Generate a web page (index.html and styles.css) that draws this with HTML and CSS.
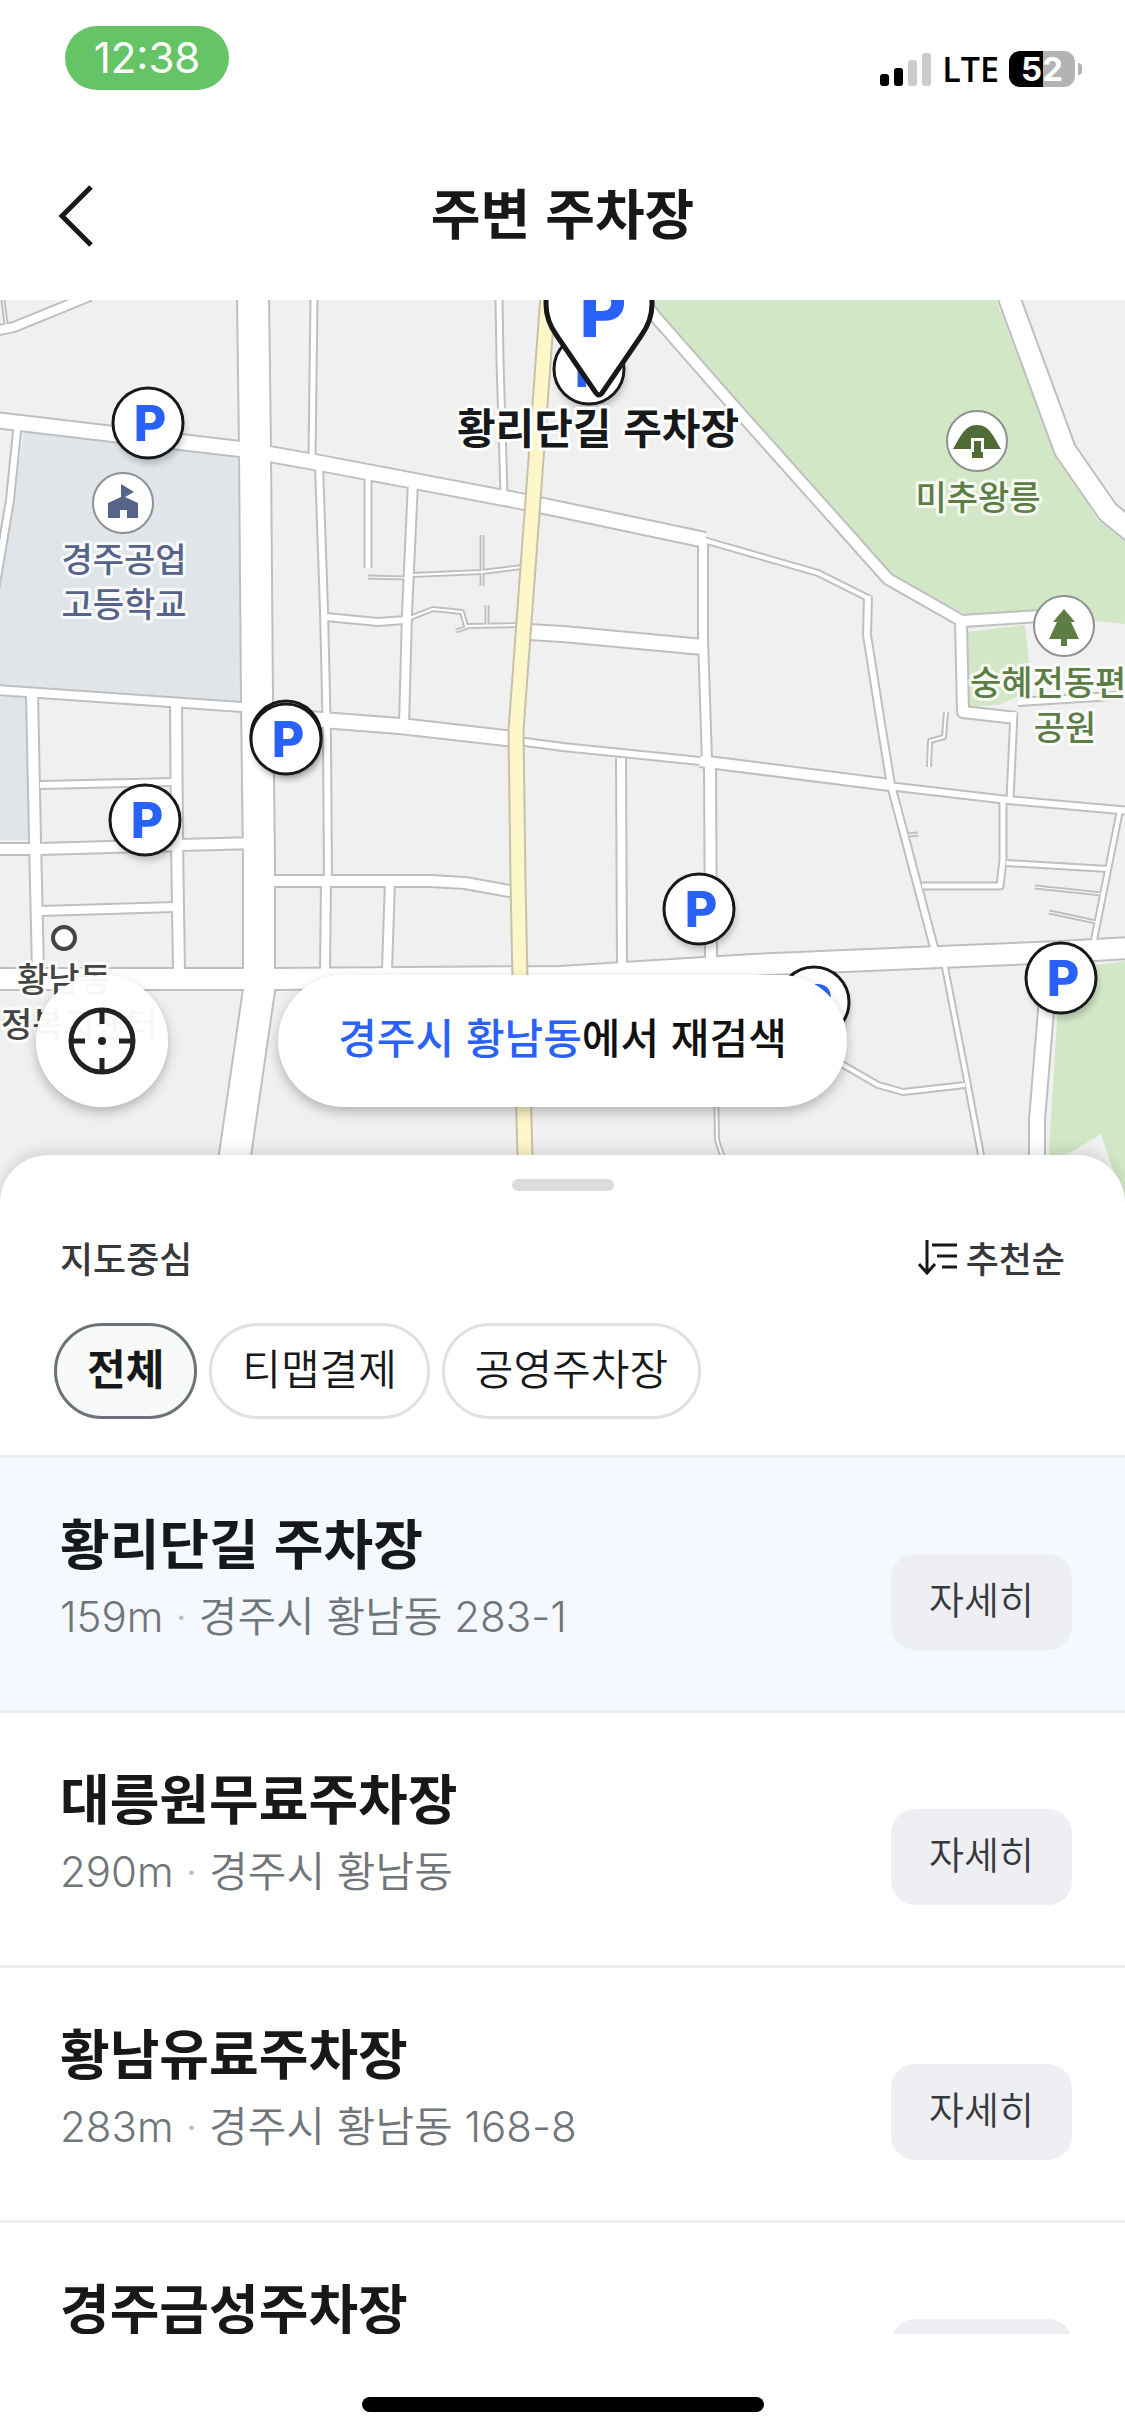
FILE: index.html
```html
<!DOCTYPE html>
<html lang="ko">
<head>
    <meta charset="UTF-8">
    <meta name="viewport" content="width=device-width, initial-scale=1.0">
    <title>주변 주차장</title>
    <link rel="stylesheet" href="styles.css">
</head>
<body>

<div class="status-bar">
    <span class="time">12:38</span>
    <div class="status-icons">
        <svg class="signal" viewBox="0 0 52 34" width="52" height="34">
            <rect x="0" y="22" width="9" height="12" rx="3"/>
            <rect x="14" y="16" width="9" height="18" rx="3"/>
            <rect class="off" x="28" y="8" width="9" height="26" rx="3"/>
            <rect class="off" x="42" y="1" width="9" height="33" rx="3"/>
        </svg>
        <span class="network">LTE</span>
        <span class="battery">52</span>
    </div>
</div>

<header class="header">
    <button class="back" aria-label="뒤로">
        <svg viewBox="0 0 36 62" width="36" height="62"><path d="M33 2 L4 31 L33 60"/></svg>
    </button>
    <h1>주변 주차장</h1>
</header>

<main>
    <section class="map">
        <svg class="map-canvas" viewBox="0 0 1125 903">
            <defs>
                <g id="roads">
                    <path class="w2" d="M3 0L6 24 M368 277L405 278 M482 235V286 M487 305V325 M456 331L468 327 M1035 587L1102 594 M1049 612L1096 622 M908 535L918 534"/>
                    <path class="w3" d="M412 275L482 272L522 267 M410 318L433 309L462 312L466 326L520 325 M946 412L944 437L930 441L929 467 M716 780L717 840L722 855L732 903"/>
                    <path class="w4" d="M944 662L966 775L981 855L988 903 M965 785L903 792L878 785L840 763 M1006 563L1108 569 M1120 510L1093 645 M700 239L818 273L870 299"/>
                    <path class="w5" d="M314 0L312 158 M499 0L500 60L504 195 M368 176V268 M1014 412L1010 500 M1003 500L1003 560L1000 586H922"/>
                    <path class="w7" d="M319 165L324 310L327 440L328 580 M326 317L378 322L405 320 M18 122L10 200L-5 290 M40 485L174 482 M518 441L563 447L700 461 M888 486L1008 500L1130 511 M1018 402L1130 395 M868 296L867 335L882 430L891 485L936 655"/>
                    <path class="w8" d="M-5 31L14 27L90 -4 M-5 390L257 408 M326 580L325 670 M390 580L387 670 M413 182L407 313L404 425 M703 238L703 340L706 430L707 460 M40 611L175 607 M621 458L622 668"/>
                    <path class="w11" d="M32 393L35 540L38 672 M176 403L177 540L179 672 M710 463L711 662 M700 461L890 485 M640 -5L653 14L731 103L888 279L962 321L1040 316 M961 322L963 412L1016 418 M-5 549L40 549L180 545L258 543 M259 581H430L465 583L515 592"/>
                    <path class="w14" d="M528 332L563 334L703 347 M-5 120L240 149L320 163L515 200L563 210L705 240 M270 416L400 426L515 439 M1047 660L1046 710L1037 820V903"/>
                    <path class="w20" d="M-5 679L270 679L560 677L753 665L940 657L1060 652L1130 648 M1008 -5L1065 150L1108 212L1135 234"/>
                    <path class="w30" d="M253 -5L255 150L257 400L259 560V690L235 855L229 903"/>
                </g>
                <path id="yellow-road" d="M548 -5L533 200L516 430L518 580L520 680L525 855L527 903"/>
                <g id="pin">
                    <circle class="pin-shadow" cx="2" cy="6" r="35"/>
                    <circle class="pin-body" r="35"/>
                    <text class="pin-letter" x="2" y="18">P</text>
                </g>
            </defs>

            <rect class="land" width="1125" height="903"/>
            <path class="school" d="M24 132L239 157L241 403L0 386V292Z M0 397H27L30 540H0Z"/>
            <path class="park" d="M645 0L893 276L969 316L1030 311L1095 321L1125 324V240L1098 220L1055 153L996 0Z"/>
            <path class="park" d="M968 332L1025 325L1030 370L1022 394L999 405L969 407Z"/>
            <path class="park" d="M1060 670L1125 661V903H1046Z"/>
            <path class="land" d="M1066 855L1101 834L1118 885L1090 903H1040Z"/>

            <use href="#roads" class="casing"/>
            <use href="#roads" class="surface"/>
            <use href="#yellow-road" class="yellow-casing"/>
            <use href="#yellow-road" class="yellow-surface"/>

            <!-- places -->
            <g class="place place-school">
                <circle class="place-dot" cx="123" cy="203" r="30"/>
                <path d="M108 218V203L121 197V184L134 192L125 197L138 203V218H127V210H120V218Z"/>
                <text x="124" y="272">경주공업</text>
                <text x="124" y="317">고등학교</text>
            </g>
            <g class="place place-park">
                <circle class="place-dot" cx="977" cy="141" r="30"/>
                <path class="tomb" d="M953 149C960 138 964 125 977 125S994 138 1001 149H984V138H971V149Z M974 141H981V152H983V158H972V152H974Z"/>
                <text x="978" y="210">미추왕릉</text>
                <circle class="place-dot" cx="1064" cy="326" r="30"/>
                <path d="M1064 309L1075 322H1071L1079 339H1067V346H1061V339H1049L1057 322H1053Z"/>
                <text class="start" x="970" y="395">숭혜전동편</text>
                <text x="1065" y="440">공원</text>
            </g>
            <g class="place place-office">
                <circle class="ring" cx="64" cy="638" r="11"/>
                <text x="64" y="692">황남동</text>
                <text class="start" x="1" y="737">정복지센터</text>
            </g>

            <!-- parking lots -->
            <use href="#pin" x="148" y="123"/>
            <use href="#pin" x="286" y="436"/>
            <use href="#pin" x="286" y="439"/>
            <use href="#pin" x="145" y="520"/>
            <use href="#pin" x="699" y="609"/>
            <use href="#pin" x="814" y="702"/>
            <use href="#pin" x="1061" y="678"/>
            <use href="#pin" x="589" y="69"/>
            <path class="pin-selected" d="M596 93L557 36C549 25 546 16 546 4A53 53 0 0 1 652 4C652 16 649 25 641 36L602 93Q599 97 596 93Z"/>
            <text class="pin-letter-big" x="603" y="37">P</text>
            <text class="pin-name" x="598" y="144">황리단길 주차장</text>
        </svg>
        <div class="map-controls">
            <button class="locate" aria-label="현재 위치">
                <svg viewBox="0 0 68 68" width="68" height="68">
                    <circle cx="34" cy="34" r="31"/>
                    <path d="M34 3V17 M34 51V65 M3 34H17 M51 34H65"/>
                    <circle class="dot" cx="34" cy="34" r="4"/>
                </svg>
            </button>
            <button class="research"><span>경주시 황남동</span>에서 재검색</button>
        </div>
    </section>

    <section class="sheet">
        <div class="handle"></div>
        <div class="sheet-head">
            <h2>지도중심</h2>
            <button class="sort">
                <svg viewBox="0 0 40 36" width="40" height="36"><path d="M9 1V34 M1 25L9 34L17 25 M14 6H39 M19 17H39 M24 28H39"/></svg>
                추천순
            </button>
        </div>
        <div class="chips">
            <button class="chip active">전체</button>
            <button class="chip">티맵결제</button>
            <button class="chip">공영주차장</button>
        </div>
        <ul class="list">
            <li class="item selected">
                <div>
                    <h3>황리단길 주차장</h3>
                    <p>159m <i>·</i> 경주시 황남동 283-1</p>
                </div>
                <button class="detail">자세히</button>
            </li>
            <li class="item">
                <div>
                    <h3>대릉원무료주차장</h3>
                    <p>290m <i>·</i> 경주시 황남동</p>
                </div>
                <button class="detail">자세히</button>
            </li>
            <li class="item">
                <div>
                    <h3>황남유료주차장</h3>
                    <p>283m <i>·</i> 경주시 황남동 168-8</p>
                </div>
                <button class="detail">자세히</button>
            </li>
            <li class="item">
                <div>
                    <h3>경주금성주차장</h3>
                </div>
                <button class="detail">자세히</button>
            </li>
        </ul>
    </section>
</main>

<footer class="home-area">
    <div class="home-bar"></div>
</footer>

</body>
</html>
```
FILE: styles.css
```css
* {
    box-sizing: border-box;
}

body {
    margin: 0;
    height: 100vh;
    display: flex;
    flex-direction: column;
    background: #fff;
    color: #17181a;
    font-family: "Noto Sans CJK KR", sans-serif;
}

h1, h2, h3, p, ul {
    margin: 0;
    padding: 0;
}

button {
    font-family: inherit;
    color: inherit;
    border: none;
    background: none;
    padding: 0;
    cursor: pointer;
}

svg {
    display: block;
}

/* status bar */
.status-bar {
    display: flex;
    justify-content: space-between;
    align-items: flex-start;
    flex-shrink: 0;
    height: 132px;
    padding: 26px 48px 0 65px;
    font-family: Inter, sans-serif;
}

.time {
    width: 164px;
    height: 64px;
    line-height: 64px;
    border-radius: 32px;
    background: #65c466;
    color: #fff;
    font-size: 42px;
    text-align: center;
}

.status-icons {
    display: flex;
    align-items: center;
    gap: 10px;
    height: 36px;
    margin-top: 25px;
}

.signal .off {
    fill: #ccc;
}

.network {
    color: #000;
    font-family: "Open Sans", sans-serif;
    font-size: 34px;
    font-weight: 600;
    line-height: 36px;
}

.battery {
    position: relative;
    width: 66px;
    height: 36px;
    line-height: 36px;
    border-radius: 11px;
    background: linear-gradient(to right, #000 52%, #b3b3b3 52%);
    color: #fff;
    font-size: 33px;
    font-weight: 700;
    text-align: center;
    margin-right: 2px;
}

.battery::after {
    content: "";
    position: absolute;
    left: 69px;
    top: 12px;
    width: 4px;
    height: 12px;
    border-radius: 0 4px 4px 0;
    background: #b3b3b3;
}

/* header */
.header {
    display: grid;
    grid-template-columns: 1fr auto 1fr;
    align-items: center;
    flex-shrink: 0;
    height: 168px;
    padding: 0 58px;
}

.back {
    justify-self: start;
}

.back path {
    fill: none;
    stroke: #17181a;
    stroke-width: 5;
}

.header h1 {
    padding-bottom: 8px;
    font-size: 54px;
    font-weight: 700;
    line-height: 80px;
}

main {
    flex: 1;
    min-height: 0;
    display: flex;
    flex-direction: column;
}

/* map */
.map {
    position: relative;
    flex-shrink: 0;
}

.map-canvas {
    width: 100%;
    height: auto;
    overflow: hidden;
}

.land {
    fill: #f0f0f0;
}

.school {
    fill: #e0e5ea;
}

.park {
    fill: #d2e7c6;
}

#roads path, #yellow-road {
    fill: none;
    stroke-linejoin: round;
}

.casing {
    --edge: 4px;
    stroke: #bfbfbf;
}

.surface {
    --edge: 0px;
    stroke: #fff;
}

.w2 { stroke-width: calc(1px + var(--edge)); }
.w3 { stroke-width: calc(2px + var(--edge)); }
.w4 { stroke-width: calc(4px + var(--edge)); }
.w5 { stroke-width: calc(5px + var(--edge)); }
.w7 { stroke-width: calc(6px + var(--edge)); }
.w8 { stroke-width: calc(8px + var(--edge)); }
.w11 { stroke-width: calc(10px + var(--edge)); }
.w14 { stroke-width: calc(14px + var(--edge)); }
.w20 { stroke-width: calc(20px + var(--edge)); }
.w30 { stroke-width: calc(30px + var(--edge)); }

.yellow-casing {
    stroke: #c9c0a8;
    stroke-width: 17px;
}

.yellow-surface {
    stroke: #fcf6c8;
    stroke-width: 13px;
}

.place text {
    font-size: 34px;
    font-weight: 500;
    text-anchor: middle;
    paint-order: stroke;
    stroke: #fff;
    stroke-opacity: 0.8;
    stroke-width: 6px;
    stroke-linejoin: round;
}

.place text.start {
    text-anchor: start;
}

.place-dot {
    fill: #fff;
    stroke: #909090;
    stroke-width: 2;
}

.place-school {
    fill: #556488;
}

.place-park {
    fill: #5c7e45;
}

.tomb {
    fill: #4f6b36;
}

.place-office {
    fill: #444;
}

.ring {
    fill: #fff;
    stroke: #444;
    stroke-width: 4;
}

.pin-shadow {
    fill: #000;
    opacity: 0.2;
    filter: blur(3px);
}

.pin-body {
    fill: #fff;
    stroke: #17181a;
    stroke-width: 3;
}

.pin-letter, .pin-letter-big {
    fill: #2962fa;
    font-family: Inter, sans-serif;
    font-size: 50px;
    font-weight: 800;
    text-anchor: middle;
}

.pin-letter-big {
    font-size: 72px;
}

.pin-selected {
    fill: #fff;
    stroke: #17181a;
    stroke-width: 5;
}

.pin-name {
    fill: #17181a;
    font-size: 42px;
    font-weight: 700;
    text-anchor: middle;
    paint-order: stroke;
    stroke: #fff;
    stroke-width: 6px;
    stroke-linejoin: round;
}

.map-controls {
    position: absolute;
    left: 36px;
    right: 36px;
    bottom: 96px;
    display: grid;
    grid-template-columns: 1fr auto 1fr;
}

.locate, .research {
    height: 132px;
    border-radius: 66px;
    background: rgba(255, 255, 255, 0.96);
    box-shadow: 0 5px 12px rgba(0, 0, 0, 0.25);
}

.locate {
    display: flex;
    align-items: center;
    justify-content: center;
    width: 132px;
}

.locate svg {
    fill: none;
    stroke: #222;
    stroke-width: 5;
}

.locate .dot {
    fill: #222;
    stroke: none;
}

.research {
    padding: 0 60px 12px;
    background: #fff;
    color: #111;
    font-size: 42px;
    font-weight: 500;
}

.research span {
    color: #2962fa;
}

/* bottom sheet */
.sheet {
    position: relative;
    flex: 1;
    min-height: 0;
    display: flex;
    flex-direction: column;
    margin-top: -48px;
    padding-top: 24px;
    border-radius: 48px 48px 0 0;
    background: #fff;
    box-shadow: 0 -4px 14px rgba(0, 0, 0, 0.12);
    clip-path: inset(-30px 0 0 0);
}

.handle {
    flex-shrink: 0;
    align-self: center;
    width: 102px;
    height: 12px;
    border-radius: 6px;
    background: #dcdcdc;
}

.sheet-head {
    display: flex;
    justify-content: space-between;
    align-items: center;
    padding: 40px 60px;
    color: #36383c;
}

.sheet-head h2, .sort {
    font-size: 36px;
    font-weight: 500;
    line-height: 52px;
}

.sort {
    display: flex;
    align-items: center;
    gap: 8px;
}

.sort path {
    fill: none;
    stroke: #17181a;
    stroke-width: 3;
}

.chips {
    display: flex;
    gap: 12px;
    padding: 0 54px 36px;
}

.chip {
    height: 96px;
    padding: 0 30px 10px;
    border: 3px solid #e0e0e7;
    border-radius: 48px;
    background: #fff;
    font-size: 42px;
    font-weight: 350;
}

.chip.active {
    border-color: #6c7278;
    background: #f8faf9;
    font-weight: 700;
}

.list {
    flex: 1;
    min-height: 0;
    overflow: hidden;
    list-style: none;
}

.item {
    display: flex;
    justify-content: space-between;
    align-items: flex-start;
    height: 255px;
    padding: 44px 53px 0 60px;
    border-top: 3px solid #ededee;
}

.item.selected {
    background: #f5f8ff;
}

.item h3 {
    font-size: 54px;
    font-weight: 700;
    line-height: 80px;
}

.item p {
    color: #70757a;
    font-family: Inter, "Noto Sans CJK KR", sans-serif;
    font-size: 42px;
    font-weight: 350;
    line-height: 70px;
}

.item i {
    color: #b8bcc2;
    font-style: normal;
}

.detail {
    width: 181px;
    height: 96px;
    margin-top: 52px;
    padding-bottom: 10px;
    border-radius: 24px;
    background: #eeeff3;
    color: #36383c;
    font-size: 38px;
    font-weight: 350;
}

/* home indicator */
.home-area {
    flex-shrink: 0;
    height: 102px;
    padding-top: 63px;
}

.home-bar {
    width: 402px;
    height: 15px;
    margin: 0 auto;
    border-radius: 8px;
    background: #000;
}
```
